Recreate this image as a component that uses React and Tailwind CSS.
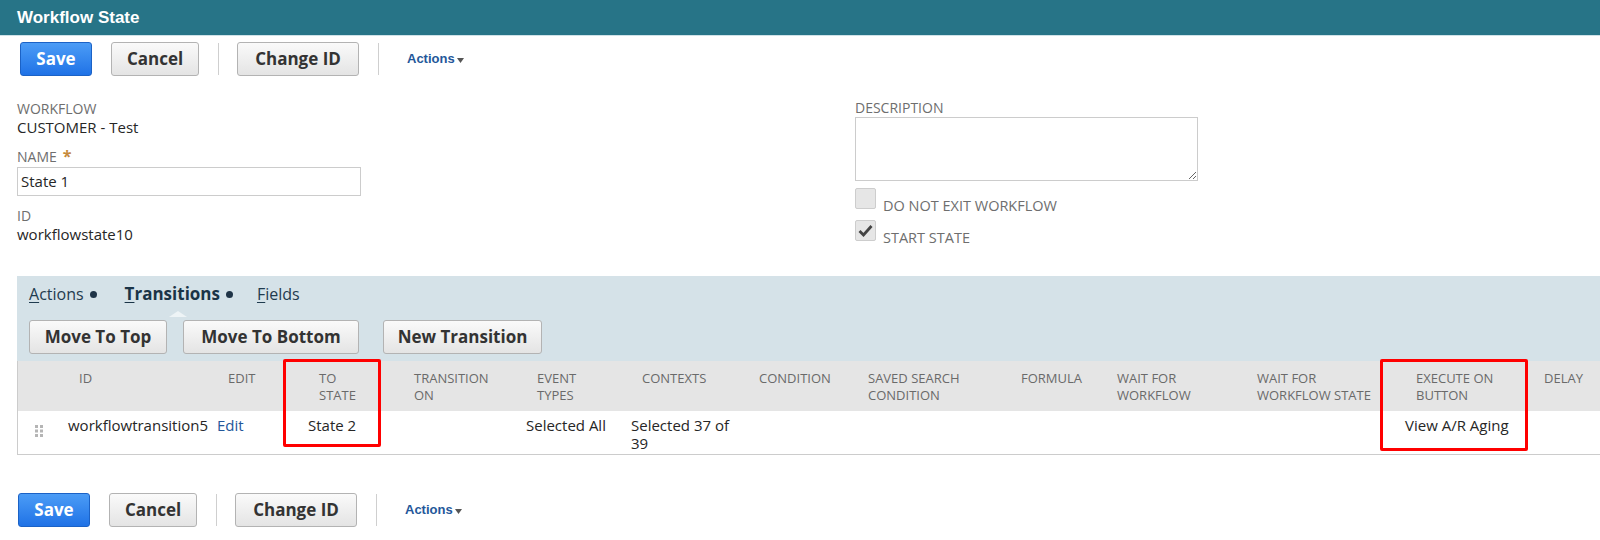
import React from "react";

function GrayBtn({ children, className = "" }) {
  return (
    <button
      className={
        "h-[34px] rounded-[3px] border border-[#b3b3b3] bg-linear-to-b from-[#fafafa] to-[#e4e4e4] text-[17px] font-bold text-[#333] font-['Open_Sans',sans-serif] " +
        className
      }
    >
      {children}
    </button>
  );
}

function SaveBtn({ className = "" }) {
  return (
    <button
      className={
        "h-[34px] w-[72px] rounded-[3px] border border-[#1b62c6] bg-linear-to-b from-[#4b9cf6] to-[#1f72e6] text-[17px] font-bold text-white font-['Open_Sans',sans-serif] " +
        className
      }
    >
      Save
    </button>
  );
}

function ActionsLink({ className = "" }) {
  return (
    <span
      className={
        "flex items-center text-[13px] font-bold text-[#24579a] font-['Liberation_Sans',Arial,sans-serif] " +
        className
      }
    >
      Actions
      <svg width="7" height="8" viewBox="0 0 7 8" className="ml-[2px] mt-[4px]">
        <path d="M0 1 L7 1 L3.5 6 Z" fill="#555" />
      </svg>
    </span>
  );
}

function ButtonBar({ className = "" }) {
  return (
    <div className={"flex items-center h-[34px] " + className}>
      <SaveBtn />
      <GrayBtn className="ml-[19px] w-[88px]">Cancel</GrayBtn>
      <div className="ml-[19px] h-[32px] w-px bg-[#cfcfcf]" />
      <GrayBtn className="ml-[18px] w-[122px]">Change ID</GrayBtn>
      <div className="ml-[19px] h-[32px] w-px bg-[#cfcfcf]" />
      <ActionsLink className="ml-[28px]" />
    </div>
  );
}

function Checkbox({ checked }) {
  return (
    <div className="w-[21px] h-[21px] border border-[#cdcdcd] bg-[#e6e6e6] rounded-[2px] flex items-center justify-center">
      {checked && (
        <svg width="15" height="13" viewBox="0 0 15 13">
          <path d="M1.5 7 L5.5 11 L13.5 2" stroke="#444" strokeWidth="2.8" fill="none" strokeLinejoin="miter" />
        </svg>
      )}
    </div>
  );
}

function DragHandle() {
  const dots = [];
  for (let r = 0; r < 3; r++) {
    for (let c = 0; c < 2; c++) {
      dots.push(<rect key={r + "-" + c} x={c * 5} y={r * 4.5} width="3" height="3" fill="#b5b5b5" />);
    }
  }
  return (
    <svg width="8" height="12" viewBox="0 0 8 12">
      {dots}
    </svg>
  );
}

function Dot() {
  return <span className="inline-block ml-[6px] w-[7px] h-[7px] rounded-full bg-[#1f3447]" />;
}

const cols = [
  { w: 44, h: "", d: "" },
  { w: 149, h: "ID", d: "workflowtransition5" },
  { w: 91, h: "EDIT", d: "Edit", link: true },
  { w: 95, h: "TO\nSTATE", d: "State 2" },
  { w: 123, h: "TRANSITION\nON", d: "" },
  { w: 105, h: "EVENT\nTYPES", d: "Selected All" },
  { w: 117, h: "CONTEXTS", d: "Selected 37 of\n39" },
  { w: 109, h: "CONDITION", d: "" },
  { w: 153, h: "SAVED SEARCH\nCONDITION", d: "" },
  { w: 96, h: "FORMULA", d: "" },
  { w: 140, h: "WAIT FOR\nWORKFLOW", d: "" },
  { w: 159, h: "WAIT FOR\nWORKFLOW STATE", d: "" },
  { w: 128, h: "EXECUTE ON\nBUTTON", d: "View A/R Aging" },
  { w: 74, h: "DELAY", d: "" },
];

export default function App() {
  return (
    <div className="relative w-[1600px] h-[540px] overflow-hidden bg-white font-['Open_Sans',sans-serif]">
      {/* Title bar */}
      <div className="h-[36px] bg-[#277487] border-b border-[#cfe2e8] flex items-center pl-[17px] text-white font-bold text-[17px] font-['Liberation_Sans',Arial,sans-serif]">
        Workflow State
      </div>

      {/* Top buttons */}
      <ButtonBar className="mt-[6px] pl-[20px]" />

      {/* Form */}
      <div className="flex h-[200px]">
        <div className="w-[855px] pl-[17px] pt-[24px]">
          <div className="text-[14px] leading-[18px] text-[#6e6e6e]">WORKFLOW</div>
          <div className="text-[15px] leading-[18px] text-[#262626]">CUSTOMER - Test</div>
          <div className="mt-[12px] text-[14px] leading-[18px] text-[#6e6e6e] flex items-start">
            NAME
            <span className="ml-[6px] text-[#c58a3c] text-[16px] font-bold leading-[16px]">*</span>
          </div>
          <div className="mt-[1px] w-[344px] h-[29px] border border-[#cccccc] flex items-center pl-[3px] text-[15px] text-[#262626]">
            State 1
          </div>
          <div className="mt-[11px] text-[14px] leading-[18px] text-[#6e6e6e]">ID</div>
          <div className="text-[15px] leading-[18px] text-[#262626]">workflowstate10</div>
        </div>
        <div className="pt-[23px]">
          <div className="text-[14px] leading-[18px] text-[#6e6e6e]">DESCRIPTION</div>
          <textarea
            readOnly
            className="block w-[343px] h-[64px] border border-[#cccccc] outline-none resize"
          />
          <div className="mt-[7px] flex items-end">
            <Checkbox />
            <span className="ml-[7px] text-[14.5px] leading-[18px] text-[#6e6e6e] -mb-[6px]">DO NOT EXIT WORKFLOW</span>
          </div>
          <div className="mt-[11px] flex items-end">
            <Checkbox checked />
            <span className="ml-[7px] text-[14.5px] leading-[18px] text-[#6e6e6e] -mb-[6px]">START STATE</span>
          </div>
        </div>
      </div>

      {/* Subtab panel */}
      <div className="ml-[17px] bg-[#d5e2e8]">
        <div className="h-[36px] flex items-center pl-[12px] text-[16px] text-[#1f3b4f]">
          <span>
            <span className="underline underline-offset-2">A</span>ctions
          </span>
          <Dot />
          <span className="relative ml-[28px] font-bold text-[17px] text-[#1a3447]">
            <span className="underline underline-offset-2">T</span>ransitions
            <span className="absolute left-[44px] top-[30px] w-0 h-0 border-l-[9px] border-r-[9px] border-b-[6px] border-l-transparent border-r-transparent border-b-[#eef4f6]" />
          </span>
          <Dot />
          <span className="ml-[24px]">
            <span className="underline underline-offset-2">F</span>ields
          </span>
        </div>
        <div className="mt-[8px] pb-[7px] pl-[12px] flex items-center">
          <GrayBtn className="w-[138px]">Move To Top</GrayBtn>
          <GrayBtn className="ml-[16px] w-[176px]">Move To Bottom</GrayBtn>
          <GrayBtn className="ml-[24px] w-[159px]">New Transition</GrayBtn>
        </div>
      </div>

      {/* Table */}
      <div className="ml-[17px] border-l border-b border-[#cccccc]">
        <div className="flex h-[50px] bg-[#e5e5e5]">
          {cols.map((c, i) => (
            <div
              key={i}
              style={{ width: c.w }}
              className="shrink-0 pl-[17px] pt-[9px] text-[13px] leading-[17px] text-[#6a6a6a] whitespace-pre-line"
            >
              {c.h}
            </div>
          ))}
        </div>
        <div className="flex h-[43px] bg-white">
          {cols.map((c, i) =>
            i === 0 ? (
              <div key={i} style={{ width: c.w }} className="shrink-0 pl-[17px] pt-[14px]">
                <DragHandle />
              </div>
            ) : (
              <div
                key={i}
                style={{ width: c.w }}
                className={
                  "shrink-0 pl-[6px] pt-[5px] text-[15px] leading-[18px] whitespace-pre-line " +
                  (c.link ? "text-[#24579a]" : "text-[#262626]")
                }
              >
                {c.d}
              </div>
            )
          )}
        </div>
      </div>

      {/* Bottom buttons */}
      <ButtonBar className="mt-[38px] pl-[18px]" />

      {/* Annotation boxes */}
      <div className="absolute left-[283px] top-[359px] w-[98px] h-[88px] border-[3px] border-[#ff0000] rounded-[2px]" />
      <div className="absolute left-[1380px] top-[359px] w-[148px] h-[92px] border-[3px] border-[#ff0000] rounded-[2px]" />
    </div>
  );
}
